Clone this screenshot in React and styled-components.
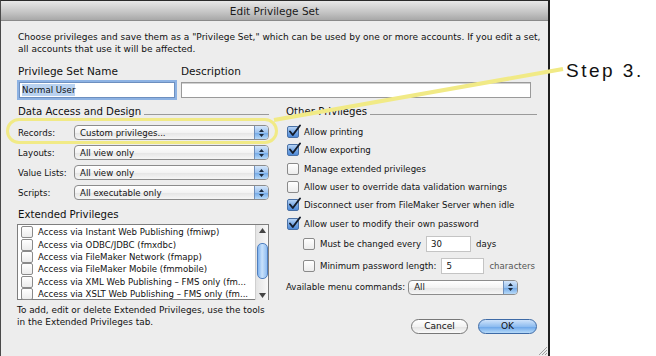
import React from "react";
import styled, { createGlobalStyle } from "styled-components";

const Global = createGlobalStyle`
    html, body {
        margin: 0;
        padding: 0;
        background: #ffffff;
    }
    body {
        font-family: "DejaVu Sans", "Liberation Sans", sans-serif;
        color: #111;
    }
`;

const Page = styled.div`
    position: relative;
    width: 656px;
    height: 356px;
    overflow: hidden;
    background: #fff;
`;

const Dialog = styled.div`
    position: relative;
    width: 550px;
    height: 380px;
    border-left: 1px solid #4a4a4a;
    border-top: 1px solid #2a2a2a;
    border-right: 2px solid #1e1e1e;
    background: #ededed;
    box-sizing: border-box;
`;

const TitleBar = styled.div`
    height: 19px;
    display: flex;
    align-items: center;
    justify-content: center;
    background: linear-gradient(#e8e8e8, #c4c4c4 60%, #a8a8a8);
    border-bottom: 1px solid #8a8a8a;
    font-size: 10.5px;
    color: #1a1a1a;
`;

const Body = styled.div`
    padding: 10px 14px 0 17px;
`;

const Intro = styled.p`
    margin: 0;
    font-size: 9px;
    line-height: 12px;
    white-space: nowrap;
`;

const NameGrid = styled.div`
    display: grid;
    grid-template-columns: 157px 1fr;
    column-gap: 6px;
    margin-top: 9px;
`;

const FieldLabel = styled.div`
    font-size: 10.5px;
    line-height: 14px;
    margin-bottom: 3px;
`;

const TextField = styled.div`
    height: 14px;
    background: #fff;
    border: 1px solid ${(p) => (p.focused ? "#6d8fbf" : "#9a9a9a")};
    box-shadow: ${(p) => (p.focused ? "0 0 0 2px #8db2e3" : "inset 0 1px 0 #d0d0d0")};
    font-size: 8.6px;
    line-height: 14px;
    padding-left: 2px;
    margin: ${(p) => (p.focused ? "1px 0 0 1px" : "1px 3px 0 0")};
`;

const Selected = styled.span`
    background: #b9d2f0;
    padding: 1px 0;
`;

const Columns = styled.div`
    display: grid;
    grid-template-columns: 251px 251px;
    column-gap: 17px;
    margin-top: 7px;
`;

const Column = styled.div`
    display: flex;
    flex-direction: column;
`;

const Heading = styled.div`
    display: flex;
    align-items: flex-end;
    gap: 3px;
    font-size: 10.2px;
    line-height: 13px;
    &::after {
        content: "";
        flex: 1;
        border-bottom: 1px solid #9a9a9a;
        margin-bottom: 3px;
    }
`;

const PlainHeading = styled.div`
    font-size: 10.2px;
    line-height: 13px;
    margin-top: ${(p) => p.top || 0}px;
`;

const PopupRows = styled.div`
    display: flex;
    flex-direction: column;
    gap: 5px;
    margin-top: 7px;
`;

const PopupRow = styled.div`
    display: grid;
    grid-template-columns: 56px 1fr;
    align-items: center;
    font-size: 8.6px;
`;

const PopupBox = styled.div`
    height: 13px;
    width: ${(p) => p.width || "auto"};
    display: flex;
    align-items: center;
    border: 1px solid #8c8c8c;
    border-radius: 4px;
    background: linear-gradient(#ffffff, #f3f3f3 50%, #e4e4e4 51%, #f6f6f6);
    font-size: 8.6px;
    overflow: hidden;
    box-sizing: content-box;
`;

const PopupText = styled.span`
    flex: 1;
    padding-left: 5px;
    white-space: nowrap;
`;

const Stepper = styled.span`
    width: 13px;
    align-self: stretch;
    border-left: 1px solid #6f8fba;
    background: linear-gradient(#d4e6fb, #9cc3ef 50%, #6ea6e6 51%, #b8daf8);
    display: flex;
    align-items: center;
    justify-content: center;
`;

const ListBox = styled.div`
    margin-top: 3px;
    height: 74px;
    border: 1px solid #7e7e7e;
    background: #fff;
    display: grid;
    grid-template-columns: 1fr 13px;
    margin-left: -1px;
`;

const ListItems = styled.div`
    display: flex;
    flex-direction: column;
    padding-top: 1px;
`;

const ListItem = styled.div`
    height: 12.4px;
    display: flex;
    align-items: center;
    gap: 5px;
    padding-left: 3px;
    font-size: 8.6px;
    white-space: nowrap;
`;

const Scrollbar = styled.div`
    border-left: 1px solid #cfcfcf;
    background: linear-gradient(90deg, #e4e4e4, #f8f8f8);
    display: flex;
    flex-direction: column;
    align-items: center;
    justify-content: space-between;
    padding: 3px 0 2px;
`;

const Thumb = styled.div`
    width: 9px;
    height: 34px;
    border: 1px solid #4f7fbf;
    border-radius: 5px;
    background: linear-gradient(90deg, #7fb2ee, #c9e2fb 45%, #8fbdf2);
    margin-top: -4px;
`;

const Help = styled.p`
    margin: 4px 0 0 -1px;
    font-size: 8.9px;
    line-height: 12px;
    white-space: nowrap;
`;

const Checks = styled.div`
    display: flex;
    flex-direction: column;
    margin-top: 5px;
`;

const CheckRow = styled.label`
    display: flex;
    align-items: center;
    gap: 5px;
    height: ${(p) => p.h || 18.3}px;
    padding-left: ${(p) => p.indent || 1}px;
    font-size: 8.6px;
    white-space: nowrap;
`;

const Box = styled.span`
    width: 10px;
    height: 10px;
    border: 1px solid ${(p) => (p.checked ? "#4a71a6" : "#8a8a8a")};
    border-radius: 2px;
    background: ${(p) =>
        p.checked
            ? "linear-gradient(#b6d3f5, #74a6e4 55%, #4f8ad8)"
            : "linear-gradient(#ffffff, #ececec)"};
    position: relative;
    flex: none;
`;

const Tick = styled.svg`
    position: absolute;
    left: 0;
    top: -3px;
`;

const SmallField = styled.span`
    width: ${(p) => p.w}px;
    height: 14px;
    background: #fff;
    border: 1px solid #c4c4c4;
    line-height: 14px;
    padding-left: 4px;
    margin-left: ${(p) => p.gap || 0}px;
    box-sizing: content-box;
`;

const Unit = styled.span`
    color: ${(p) => (p.muted ? "#555" : "#111")};
`;

const MenuRow = styled.div`
    display: flex;
    align-items: center;
    gap: 3px;
    font-size: 8.6px;
    margin-top: 3px;
`;

const Buttons = styled.div`
    display: flex;
    justify-content: flex-end;
    gap: 10px;
    margin-top: 24px;
`;

const Pill = styled.button`
    width: ${(p) => p.w}px;
    height: 15px;
    border-radius: 8px;
    font-family: inherit;
    font-size: 9px;
    padding: 0;
    line-height: 13px;
    color: #111;
    border: 1px solid ${(p) => (p.primary ? "#3d6aa6" : "#777")};
    background: ${(p) =>
        p.primary
            ? "linear-gradient(#cfe3fa, #8fbdf0 50%, #68a3e8 51%, #b6daf9)"
            : "linear-gradient(#ffffff, #f2f2f2 50%, #e2e2e2 51%, #fafafa)"};
`;

const Grip = styled.svg`
    position: absolute;
    right: 0;
    top: 344px;
`;

const Highlight = styled.div`
    position: absolute;
    left: 6px;
    top: 118px;
    width: 266px;
    height: 20px;
    border: 3.5px solid #f1ea86;
    border-radius: 14px;
    pointer-events: none;
`;

const Leader = styled.svg`
    position: absolute;
    left: 0;
    top: 0;
    pointer-events: none;
`;

const StepLabel = styled.div`
    position: absolute;
    left: 566px;
    top: 60px;
    font-family: "Liberation Sans", Arial, sans-serif;
    font-size: 19px;
    letter-spacing: 2.5px;
    color: #111;
`;

const Arrows = () => (
    <svg width="7" height="10" viewBox="0 0 7 10">
        <path d="M3.5 1 L6 4 H1 Z M3.5 9 L6 6 H1 Z" fill="#1c2a3c" />
    </svg>
);

const Check = ({ checked }) => (
    <Box checked={checked}>
        {checked && (
            <Tick width="13" height="13" viewBox="0 0 13 13">
                <path
                    d="M2 7.5 L4.8 11 L12 1.5"
                    fill="none"
                    stroke="#141c2a"
                    strokeWidth="1.9"
                    strokeLinecap="round"
                    strokeLinejoin="round"
                />
            </Tick>
        )}
    </Box>
);

const Popup = ({ children, width }) => (
    <PopupBox width={width}>
        <PopupText>{children}</PopupText>
        <Stepper>
            <Arrows />
        </Stepper>
    </PopupBox>
);

const popups = [
    ["Records:", "Custom privileges..."],
    ["Layouts:", "All view only"],
    ["Value Lists:", "All view only"],
    ["Scripts:", "All executable only"],
];

const extended = [
    "Access via Instant Web Publishing (fmiwp)",
    "Access via ODBC/JDBC (fmxdbc)",
    "Access via FileMaker Network (fmapp)",
    "Access via FileMaker Mobile (fmmobile)",
    "Access via XML Web Publishing – FMS only (fm...",
    "Access via XSLT Web Publishing – FMS only (fm...",
];

const others = [
    ["Allow printing", true],
    ["Allow exporting", true],
    ["Manage extended privileges", false],
    ["Allow user to override data validation warnings", false],
    ["Disconnect user from FileMaker Server when idle", true],
    ["Allow user to modify their own password", true],
];

export default function App() {
    return (
        <Page>
            <Global />
            <Dialog>
                <TitleBar>Edit Privilege Set</TitleBar>
                <Body>
                    <Intro>
                        Choose privileges and save them as a "Privilege Set," which can be used by one or more accounts. If you edit a set,
                        <br />
                        all accounts that use it will be affected.
                    </Intro>
                    <NameGrid>
                        <FieldLabel>Privilege Set Name</FieldLabel>
                        <FieldLabel>Description</FieldLabel>
                        <TextField focused>
                            <Selected>Normal User</Selected>
                        </TextField>
                        <TextField />
                    </NameGrid>
                    <Columns>
                        <Column>
                            <Heading>Data Access and Design</Heading>
                            <PopupRows>
                                {popups.map(([label, value]) => (
                                    <PopupRow key={label}>
                                        <span>{label}</span>
                                        <Popup>{value}</Popup>
                                    </PopupRow>
                                ))}
                            </PopupRows>
                            <PlainHeading top={8}>Extended Privileges</PlainHeading>
                            <ListBox>
                                <ListItems>
                                    {extended.map((t) => (
                                        <ListItem key={t}>
                                            <Check />
                                            {t}
                                        </ListItem>
                                    ))}
                                </ListItems>
                                <Scrollbar>
                                    <svg width="7" height="5" viewBox="0 0 7 5">
                                        <path d="M3.5 0 L7 5 H0 Z" fill="#444" />
                                    </svg>
                                    <Thumb />
                                    <svg width="7" height="5" viewBox="0 0 7 5">
                                        <path d="M0 0 H7 L3.5 5 Z" fill="#444" />
                                    </svg>
                                </Scrollbar>
                            </ListBox>
                            <Help>
                                To add, edit or delete Extended Privileges, use the tools
                                <br />
                                in the Extended Privileges tab.
                            </Help>
                        </Column>
                        <Column>
                            <Heading>Other Privileges</Heading>
                            <Checks>
                                {others.map(([t, c]) => (
                                    <CheckRow key={t}>
                                        <Check checked={c} />
                                        {t}
                                    </CheckRow>
                                ))}
                                <CheckRow indent={17} h={22}>
                                    <Check />
                                    Must be changed every
                                    <SmallField w={39}>30</SmallField>
                                    <Unit>days</Unit>
                                </CheckRow>
                                <CheckRow indent={17} h={22}>
                                    <Check />
                                    Minimum password length:
                                    <SmallField w={37}>5</SmallField>
                                    <Unit muted>characters</Unit>
                                </CheckRow>
                            </Checks>
                            <MenuRow>
                                Available menu commands:
                                <Popup width="108px">All</Popup>
                            </MenuRow>
                            <Buttons>
                                <Pill w={57}>Cancel</Pill>
                                <Pill w={59} primary>
                                    OK
                                </Pill>
                            </Buttons>
                        </Column>
                    </Columns>
                </Body>
                <Grip width="11" height="11" viewBox="0 0 11 11">
                    <path d="M10 2 L2 10 M10 5 L5 10 M10 8 L8 10" stroke="#8a8a8a" strokeWidth="0.8" />
                </Grip>
            </Dialog>
            <Highlight />
            <Leader width="656" height="356">
                <line x1="274" y1="120" x2="563" y2="69" stroke="#f1ea86" strokeWidth="4" />
            </Leader>
            <StepLabel>Step 3.</StepLabel>
        </Page>
    );
}
